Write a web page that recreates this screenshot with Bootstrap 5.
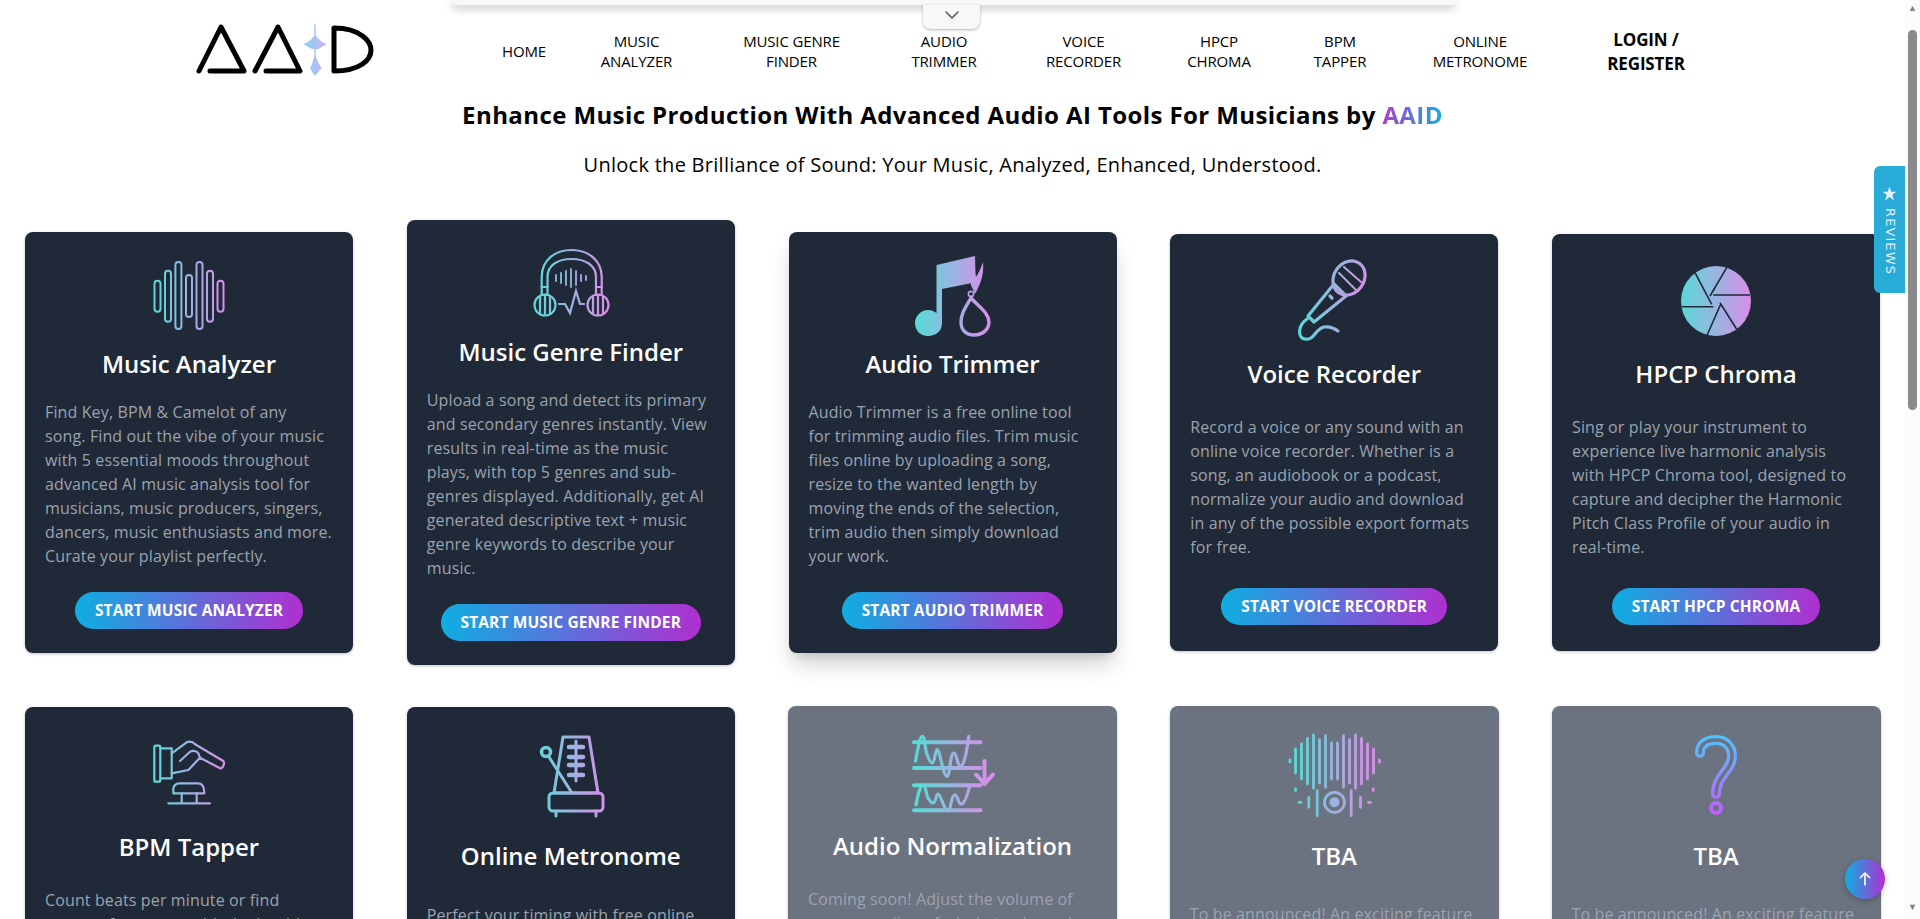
<!DOCTYPE html>
<html lang="en">
<head>
  <meta charset="UTF-8" />
  <meta name="viewport" content="width=device-width, initial-scale=1.0"/>
  <title>AAID - Audio AI Tools</title>
  <link href="https://cdn.jsdelivr.net/npm/bootstrap@5.3.0/dist/css/bootstrap.min.css" rel="stylesheet">
  <style>
    html, body { height: 100%; overflow: hidden; }
    body { font-family: "Open Sans", "Noto Sans", sans-serif; color: #000; background: #fff; letter-spacing: .008em; }

    .page-main { width: 1905px; height: 919px; overflow: hidden; flex: none; }
    .fake-scroll { width: 15px; background: #fbfbfb; color: #808080; font-size: 9px; line-height: 16px; letter-spacing: 0; }
    .fake-thumb { width: 9px; height: 380px; margin: 14px 0 0 3px; background: #8a8a8a; border-radius: 5px; }

    .site-head { height: 96px; padding-left: 195px; }
    .site-logo { width: 185px; height: 60px; margin-top: 20px; }
    .site-nav { display: grid; grid-template-columns: 100px 125px 185px 120px 159px 112px 130px 150px 182px; margin-left: 94px; margin-top: 26px; font-size: 15px; line-height: 20px; letter-spacing: -.01em; }
    .site-nav a { color: #000; text-decoration: none; text-align: center; align-self: center; }
    .site-nav a.login-link { font-size: 17px; line-height: 24px; font-weight: 700; margin-top: 2px; }

    .hero-title { font-size: 24px; line-height: 32px; font-weight: 700; margin: 3px 0 0; letter-spacing: .017em; }
    .hero-sub { font-size: 20px; line-height: 28px; margin: 20px 0 0; letter-spacing: .014em; }
    .aaid-text { background: linear-gradient(90deg, #b03ad0, #12ade2); -webkit-background-clip: text; background-clip: text; color: transparent; }

    .tool-grid { display: grid; grid-template-columns: repeat(5, 328px); justify-content: space-between; align-items: center; row-gap: 42px; padding: 0 25px; margin-top: 41px; }
    .tool-card { background: #1f2937; border-radius: 8px; box-shadow: 0 1px 3px rgba(0,0,0,.25); }
    .tool-card.lifted { box-shadow: 0 14px 24px -4px rgba(0,0,0,.2), 0 6px 10px -4px rgba(0,0,0,.12); }
    .tool-card.muted-card { background: #6b7280; margin: -1px -.5px 0; }
    .tool-card .card-body { padding: 24px 20px; }
    .tool-icon { width: 80px; height: 80px; overflow: visible; flex: none; }
    .tool-title { font-size: 24px; line-height: 32px; font-weight: 600; color: #fff; margin: 12px 0 0; letter-spacing: 0; }
    .tool-text { font-size: 16px; line-height: 24px; color: #9ca3af; text-align: left; margin: 20px 0 0; width: 100%; }
    .tool-btn { margin-top: 24px; padding: 8px 20px; font-size: 15.5px; line-height: 21px; font-weight: 700; color: #fff; text-transform: uppercase; border: 0; border-radius: 20px; background: linear-gradient(90deg, #0eaee2, #b02fd0); }

    .roomy .card-body { padding-bottom: 26px; }
    .roomy .tool-title { margin-top: 20px; }
    .roomy .tool-text { margin-top: 25px; }
    .roomy .tool-btn { margin-top: 29px; }
    .roomier .card-body { padding-top: 29px; }
    .roomier .tool-title { margin-top: 25px; }
    .roomier .tool-text { margin-top: 30px; }
    .metro-card .tool-title { margin-top: 24px; }
    .metro-card .tool-text { margin-top: 31px; }

    .top-panel { position: absolute; top: 0; left: 451px; width: 1005px; height: 5px; background: #f8f8f8; border-radius: 0 0 8px 8px; box-shadow: 0 3px 8px rgba(0,0,0,.3); }
    .top-handle { position: absolute; top: 5px; left: 923px; width: 57px; height: 24px; padding-top: 5px; background: #f8f8f8; border-radius: 0 0 8px 8px; box-shadow: 0 1px 3px rgba(0,0,0,.3); }
    .reviews-tab { position: absolute; top: 166px; left: 1874px; width: 31px; height: 127px; padding-top: 20px; background: #29abd8; border-radius: 6px 0 0 6px; color: #dff2fa; }
    .reviews-text { writing-mode: vertical-rl; font-family: "DejaVu Sans", sans-serif; font-size: 13px; line-height: 16px; letter-spacing: 1.100px; margin-top: 7px; }
    .to-top { position: absolute; top: 859px; left: 1845px; width: 40px; height: 40px; border: 0; border-radius: 50%; padding: 0; background: linear-gradient(90deg, #0eaee2, #b02fd0); box-shadow: 0 2px 6px rgba(0,0,0,.25); }
  </style>
</head>
<body class="d-flex">

  <svg width="0" height="0" class="position-absolute">
    <defs>
      <linearGradient id="toolGrad" gradientUnits="userSpaceOnUse" x1="5" y1="0" x2="75" y2="0">
        <stop offset="0" stop-color="#5ad9d6"/>
        <stop offset="1" stop-color="#d98eea"/>
      </linearGradient>
      <linearGradient id="askGrad" gradientUnits="userSpaceOnUse" x1="0" y1="0" x2="0" y2="80">
        <stop offset="0" stop-color="#4dc4ff"/>
        <stop offset="1" stop-color="#c65cff"/>
      </linearGradient>
      <linearGradient id="logoGrad" gradientUnits="userSpaceOnUse" x1="108" y1="0" x2="132" y2="0">
        <stop offset="0" stop-color="#7ed0f5"/>
        <stop offset="1" stop-color="#d3b4f0"/>
      </linearGradient>
    </defs>
  </svg>

  <main class="page-main">
    <header class="site-head d-flex align-items-start">
      <svg class="site-logo" viewBox="0 0 185 60" fill="none" stroke="#000" stroke-width="5" stroke-linecap="round" stroke-linejoin="round">
        <path d="M4 51 26 7 49 51H15"/>
        <path d="M60 51 83 7 105 51H71"/>
        <path d="M120 5V55" stroke="url(#logoGrad)" stroke-width="1.500"/>
        <path d="M108 24C114 23 117 18 120 15 123 19 128 23 132 24 126 27 124 30 120 29 116 30 113 26 108 24Z" fill="url(#logoGrad)" stroke="none"/>
        <path d="M115 48C117 46 118 40 120 35 122 40 125 46 127 48 124 50 123 54 120 55 117 54 117 50 115 48Z" fill="url(#logoGrad)" stroke="none"/>
        <path d="M139 8C166 8 176 22 176 30 176 40 165 51 139 51Z"/>
      </svg>
      <nav class="site-nav">
        <a href="#">HOME</a>
        <a href="#">MUSIC<br>ANALYZER</a>
        <a href="#">MUSIC GENRE<br>FINDER</a>
        <a href="#">AUDIO<br>TRIMMER</a>
        <a href="#">VOICE<br>RECORDER</a>
        <a href="#">HPCP<br>CHROMA</a>
        <a href="#">BPM<br>TAPPER</a>
        <a href="#">ONLINE<br>METRONOME</a>
        <a href="#" class="login-link">LOGIN /<br>REGISTER</a>
      </nav>
    </header>

    <h1 class="hero-title text-center">Enhance Music Production With Advanced Audio AI Tools For Musicians by <span class="aaid-text">AAID</span></h1>
    <p class="hero-sub text-center">Unlock the Brilliance of Sound: Your Music, Analyzed, Enhanced, Understood.</p>

    <section class="tool-grid">

      <div class="card tool-card border-0">
        <div class="card-body d-flex flex-column align-items-center text-center">
          <svg class="tool-icon" viewBox="0 0 80 80" fill="none" stroke="url(#toolGrad)" stroke-width="2">
            <rect x="5.500" y="24.700" width="6" height="31" rx="3"/>
            <rect x="16" y="14.700" width="6" height="51" rx="3"/>
            <rect x="26.400" y="6" width="6" height="67" rx="3"/>
            <rect x="37" y="19" width="6" height="42" rx="3"/>
            <rect x="47.500" y="6" width="6" height="67" rx="3"/>
            <rect x="58" y="14.700" width="6" height="51" rx="3"/>
            <rect x="68.500" y="24.700" width="6" height="31" rx="3"/>
          </svg>
          <h2 class="tool-title">Music Analyzer</h2>
          <p class="tool-text">Find Key, BPM &amp; Camelot of any<br>song. Find out the vibe of your music with 5 essential moods throughout advanced AI music analysis tool for musicians, music producers, singers, dancers, music enthusiasts and more. Curate your playlist perfectly.</p>
          <a href="#" class="btn tool-btn">Start Music Analyzer</a>
        </div>
      </div>

      <div class="card tool-card border-0">
        <div class="card-body d-flex flex-column align-items-center text-center">
          <svg class="tool-icon" viewBox="0 0 80 80" fill="none" stroke="url(#toolGrad)" stroke-width="2.200" stroke-linecap="round">
            <path d="M10.700 43V33C10.700 16 24 6 40.500 6S70.700 16 70.700 33V43"/>
            <path d="M16.500 43V33C16.500 21 27 15 40.500 15S65 21 65 33V43"/>
            <path d="M10.700 43H16.500V51H10.700ZM65 43H70.700V51H65Z"/>
            <ellipse cx="14" cy="61" rx="10.500" ry="10.500"/>
            <ellipse cx="67" cy="61" rx="10.500" ry="10.500"/>
            <path d="M9 52V70M14 51V71M19 52V70M62 52V70M67 51V71M72 52V70"/>
            <path d="M25 31V37M30 29V39M35 27V41M40 25V43M45 27V41M50 31V37M55 32V36" stroke-width="1.800"/>
            <path d="M28 60H34L39 69 45 47 49 60H53"/>
          </svg>
          <h2 class="tool-title">Music Genre Finder</h2>
          <p class="tool-text">Upload a song and detect its primary and secondary genres instantly. View results in real-time as the music plays, with top 5 genres and sub-genres displayed. Additionally, get AI generated descriptive text + music genre keywords to describe your music.</p>
          <a href="#" class="btn tool-btn">Start Music Genre Finder</a>
        </div>
      </div>

      <div class="card tool-card lifted border-0">
        <div class="card-body d-flex flex-column align-items-center text-center">
          <svg class="tool-icon" viewBox="0 0 80 80" fill="none">
            <path d="M23.500 9 62 0 62.500 18 64 26 29 33V67C29 75 23 80 15 80 7 80 2 74 2 67 2 60 8 54 15 54 18 54 21 55 23.500 57Z" fill="url(#toolGrad)"/>
            <path d="M70 6C71 16 69 26 62 38L57.500 28C63 22 67 15 70 6Z" fill="url(#toolGrad)"/>
            <path d="M58 42C52 52 48 58 48 66 48 74 53 79 61 79 70 79 76 73 76 66 76 57 66 51 58 42Z" stroke="url(#toolGrad)" stroke-width="3.400"/>
            <circle cx="58" cy="38" r="2.600" stroke="url(#toolGrad)" stroke-width="1.600"/>
          </svg>
          <h2 class="tool-title">Audio Trimmer</h2>
          <p class="tool-text">Audio Trimmer is a free online tool for trimming audio files. Trim music files online by uploading a song, resize to the wanted length by moving the ends of the selection,<br>trim audio then simply download your work.</p>
          <a href="#" class="btn tool-btn">Start Audio Trimmer</a>
        </div>
      </div>

      <div class="card tool-card roomy border-0">
        <div class="card-body d-flex flex-column align-items-center text-center">
          <svg class="tool-icon" viewBox="0 0 80 80" fill="none" stroke="url(#toolGrad)" stroke-width="3.200" stroke-linecap="round" stroke-linejoin="round">
            <ellipse cx="55" cy="20" rx="15" ry="18" transform="rotate(35 55 20)"/>
            <path d="M45 15 62 32M50 9 67 24" stroke-width="2"/>
            <path d="M40 26 52 38 20 64 14 58Z"/>
            <path d="M36 38 38 40"/>
            <path d="M13 61C4 67 3 80 11 81 20 83 21 71 30 69 36 68 40 70 44 73"/>
          </svg>
          <h2 class="tool-title">Voice Recorder</h2>
          <p class="tool-text">Record a voice or any sound with an online voice recorder. Whether is a song, an audiobook or a podcast, normalize your audio and download in any of the possible export formats for free.</p>
          <a href="#" class="btn tool-btn">Start Voice Recorder</a>
        </div>
      </div>

      <div class="card tool-card roomy border-0">
        <div class="card-body d-flex flex-column align-items-center text-center">
          <svg class="tool-icon" viewBox="0 0 80 80" fill="none">
            <circle cx="40" cy="43" r="35" fill="url(#toolGrad)"/>
            <path d="M19 14.700 35.700 46.300M50.700 9.700 34 38M74 37H37.300M60.700 71.300 44 44.700M30.700 78 44.700 46.300M5.700 48.700H37.300" stroke="#1f2937" stroke-width="1.600"/>
          </svg>
          <h2 class="tool-title">HPCP Chroma</h2>
          <p class="tool-text">Sing or play your instrument to experience live harmonic analysis with HPCP Chroma tool, designed to capture and decipher the Harmonic Pitch Class Profile of your audio in real-time.</p>
          <a href="#" class="btn tool-btn">Start HPCP Chroma</a>
        </div>
      </div>

      <div class="card tool-card roomy border-0 align-self-start">
        <div class="card-body d-flex flex-column align-items-center text-center">
          <svg class="tool-icon" viewBox="0 0 80 80" fill="none" stroke="url(#toolGrad)" stroke-width="2.200" stroke-linecap="round" stroke-linejoin="round">
            <rect x="5.300" y="14.700" width="6" height="36" rx="1.500"/>
            <path d="M11.300 17.300H22.700V47.300H11.300"/>
            <path d="M22.700 22.300 37.700 11.300C41 10 44 11 46 13.300L74.300 30C76 32 74 38 71 37.300L51 26.700 39.300 39 22.700 42.300"/>
            <path d="M31 30 41 20.700C44 19 48 20 49.300 22.300L51 26.700"/>
            <path d="M24.300 62.300V57.300C25 54 28 52.300 31 52.300H49.300C53 52.300 55.300 56 55.300 62.300Z"/>
            <path d="M32.700 62V72.300M47.700 62V72.300M19.300 72.300H61"/>
          </svg>
          <h2 class="tool-title">BPM Tapper</h2>
          <p class="tool-text">Count beats per minute or find tempo of any song with the intuitive BPM Tapper tool.</p>
        </div>
      </div>

      <div class="card tool-card roomier metro-card border-0 align-self-start">
        <div class="card-body d-flex flex-column align-items-center text-center">
          <svg class="tool-icon" viewBox="0 0 80 80" fill="none" stroke="url(#toolGrad)" stroke-width="3" stroke-linecap="round" stroke-linejoin="round">
            <path d="M32 1H58L67 57H23Z"/>
            <rect x="18" y="57" width="54" height="18" rx="4"/>
            <path d="M25 75V80M65 75V80"/>
            <circle cx="15" cy="16" r="4.500" stroke-width="3.500"/>
            <path d="M18 21 41 57" stroke-width="3"/>
            <path d="M45 5V45" stroke-width="3"/>
            <path d="M38 11H52M38 21H52M38 29H52M38 39H52" stroke-width="4.500"/>
          </svg>
          <h2 class="tool-title">Online Metronome</h2>
          <p class="tool-text">Perfect your timing with free online metronome and keep a steady beat.</p>
        </div>
      </div>

      <div class="card tool-card muted-card roomy border-0 align-self-start">
        <div class="card-body d-flex flex-column align-items-center text-center">
          <svg class="tool-icon" viewBox="0 0 80 80" fill="none" stroke="url(#toolGrad)" stroke-width="4" stroke-linecap="round" stroke-linejoin="round">
            <g transform="translate(0 3)">
              <path d="M1 9.300H67.500M1 35H67.500M1 52.300H67.500M1 77.300H67.500"/>
              <path d="M2.500 28C5 15 7 3.300 9.200 3.300 12 3.300 12 18 14.200 21.700 16 26 17 30 19.200 30 22 30 22 17 24.200 16.700 27 17 30 43.300 34.200 43.300 37 43 37 20 40.900 20 44 20 44 33 47.500 33.300 51 33 54 18 55.800 3.300" stroke-width="3.200"/>
              <path d="M3 72C5 60 8 52 10 52 13 52 13 62 15 65 17 68 18 70 20 70 23 70 23 61 25 61 28 61 31 78 35 78 38 78 38 62 42 62 45 62 45 71 48 71 52 71 55 60 57 52" stroke-width="3.200"/>
              <path d="M71.500 28V50M63.200 41.700 71.500 51 79.800 41.700"/>
            </g>
          </svg>
          <h2 class="tool-title">Audio Normalization</h2>
          <p class="tool-text">Coming soon! Adjust the volume of your recording of whole tracks and songs easily.</p>
        </div>
      </div>

      <div class="card tool-card muted-card roomier border-0 align-self-start">
        <div class="card-body d-flex flex-column align-items-center text-center">
          <svg class="tool-icon" viewBox="0 0 80 80" fill="none" stroke="url(#toolGrad)" stroke-width="2.800" stroke-linecap="round">
            <path d="M1.500 14V38M7.500 9V44M13.500 3.300V49M19.500 0V53.300M25.500 4.700V48M31.500 .7V52.300M37.500 8V44M43.500 8V44M49.500 .7V52.300M55.500 4.700V48M61.500 0V53.300M67.500 3.300V49M73.500 9V44M79.500 14V38"/>
            <path d="M-4 25V27M85.500 25V27M1.500 54V55.500M79.200 54V55.500M5 67.300H7M74.500 67.300H76.500M14.800 62.300V72.300M23.200 55.700V80.700M57.200 55.700V80.700M66.500 62.300V72.300"/>
            <circle cx="40.500" cy="67.300" r="10"/>
            <circle cx="40.500" cy="67.300" r="5" fill="url(#toolGrad)" stroke="none"/>
          </svg>
          <h2 class="tool-title">TBA</h2>
          <p class="tool-text">To be announced! An exciting feature is on its way, stay tuned for more.</p>
        </div>
      </div>

      <div class="card tool-card muted-card roomier border-0 align-self-start">
        <div class="card-body d-flex flex-column align-items-center text-center">
          <svg class="tool-icon" viewBox="0 0 80 80" fill="none" stroke-linecap="round">
            <path d="M24 18C24 9 31 5 40 5 50 5 56 12 56 21 56 36 40 40 40 59" stroke="url(#askGrad)" stroke-width="10"/>
            <path d="M24 18C24 9 31 5 40 5 50 5 56 12 56 21 56 36 40 40 40 59" stroke="#6b7280" stroke-width="3.400"/>
            <circle cx="40" cy="73" r="5" stroke="url(#askGrad)" stroke-width="4"/>
          </svg>
          <h2 class="tool-title">TBA</h2>
          <p class="tool-text">To be announced! An exciting feature is on its way, stay tuned for more.</p>
        </div>
      </div>

    </section>
  </main>

  <aside class="fake-scroll text-center d-flex flex-column">
    <div>&#9650;</div>
    <div class="fake-thumb"></div>
    <div class="mt-auto mb-1">&#9660;</div>
  </aside>

  <div class="top-panel"></div>
  <div class="top-handle d-flex justify-content-center">
    <svg width="16" height="10" viewBox="0 0 16 10" fill="none" stroke="#555" stroke-width="1.500" stroke-linecap="round"><path d="M2 2 8 8 14 2"/></svg>
  </div>
  <div class="reviews-tab d-flex flex-column align-items-center">
    <svg width="15" height="15" viewBox="0 0 24 24" fill="#dff2fa"><path d="M12 1 15 9H23L16.500 14 19 23 12 17.500 5 23 7.500 14 1 9H9Z"/></svg>
    <span class="reviews-text">REVIEWS</span>
  </div>
  <button class="to-top d-flex align-items-center justify-content-center" aria-label="Back to top">
    <svg width="14" height="16" viewBox="0 0 14 16" fill="none" stroke="#fff" stroke-width="1.600" stroke-linecap="round" stroke-linejoin="round"><path d="M7 14V2M2.500 6.500 7 2 11.500 6.500"/></svg>
  </button>

  <script src="https://cdn.jsdelivr.net/npm/bootstrap@5.3.0/dist/js/bootstrap.bundle.min.js"></script>
</body>
</html>
